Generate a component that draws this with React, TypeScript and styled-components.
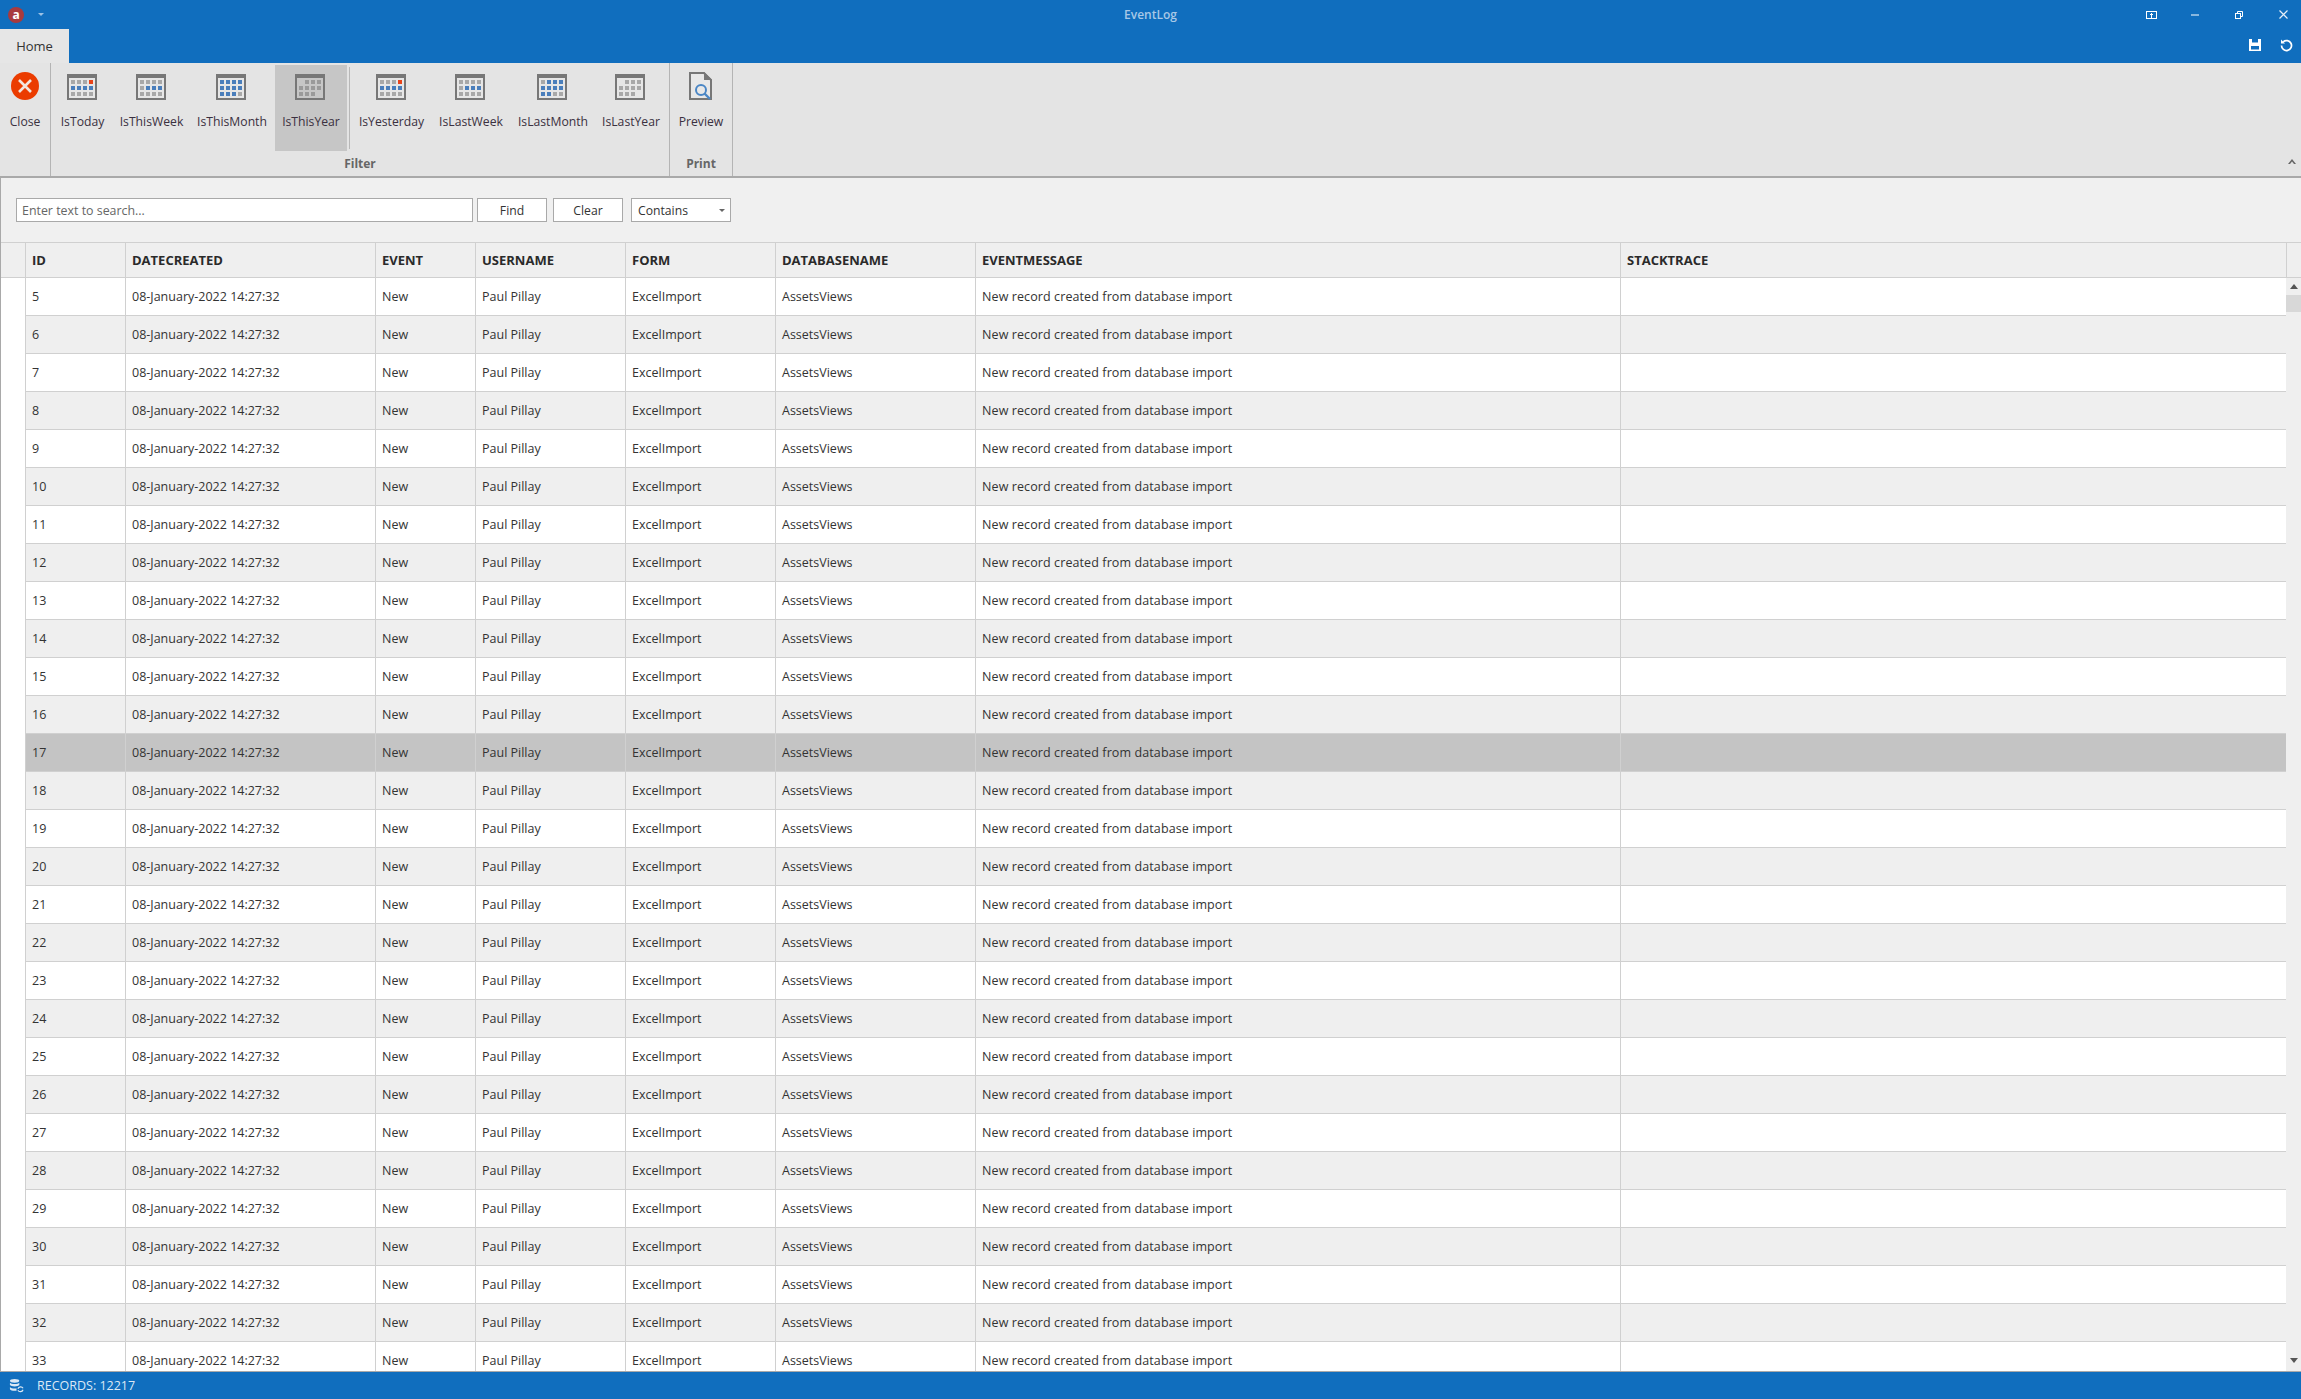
import React from "react";
import styled, { createGlobalStyle } from "styled-components";

const COLS = "25px 100px 250px 100px 150px 150px 200px 645px 1fr";

const Global = createGlobalStyle`
  html, body { margin: 0; padding: 0; height: 100%; overflow: hidden; background: #f0f0f0; }
  #root { height: 100%; }
  * { box-sizing: border-box; }
`;

const Page = styled.div`
  width: 2301px; height: 1399px; display: flex; flex-direction: column; overflow: hidden;
  font-family: "Open Sans", "Noto Sans", sans-serif; font-size: 12px; color: #2b2b2b; background: #f0f0f0;
`;
const TitleBar = styled.div`
  height: 29px; flex: none; background: #106ebe; display: flex; align-items: center; position: relative; padding-left: 8px;
`;
const TitleText = styled.div`
  position: absolute; left: 0; right: 0; top: 7px; text-align: center; color: #a8c8e6; font-weight: 600; font-size: 12px; line-height: 16px;
`;
const WindowIcons = styled.div`
  margin-left: auto; margin-right: -4px; display: flex; align-items: center; height: 100%; position: relative;
`;
const WinBtn = styled.div`
  width: 44px; height: 29px; display: flex; align-items: center; justify-content: center;
`;
const CaretIcon = styled.svg`
  margin-left: 14px;
`;
const TabBar = styled.div`
  height: 34px; flex: none; background: #106ebe; display: flex; align-items: stretch; justify-content: space-between;
`;
const Tab = styled.div`
  width: 69px; background: #e6e6e6; display: flex; align-items: center; justify-content: center; color: #333; font-size: 13px;
`;
const QuickIcons = styled.div`
  display: flex; align-items: center; gap: 19px; padding-right: 8px; margin-top: -2px;
`;
const Ribbon = styled.div`
  height: 115px; flex: none; background: #e4e4e4; border-bottom: 2px solid #a9a9a9; display: flex; position: relative;
`;
const Group = styled.div<{ $w: number }>`
  width: ${(p) => p.$w}px; flex: none; border-right: 1px solid #b4b4b4; display: flex; flex-direction: column;
`;
const GroupItems = styled.div`
  height: 88px; display: flex; padding-top: 2px;
`;
const GroupLabel = styled.div`
  flex: 1; text-align: center; font-weight: 700; font-size: 12px; line-height: 20px; color: #666; padding-top: 3px;
`;
const Big = styled.div<{ $w: number; $active?: boolean }>`
  width: ${(p) => p.$w}px; flex: none; height: 86px; display: flex; flex-direction: column; align-items: center;
  background: ${(p) => (p.$active ? "#c6c6c6" : "transparent")}; color: #3a3040; font-size: 12.2px; line-height: 17px; padding-top: 7px;
`;
const IconWrap = styled.div`
  height: 28px; margin-bottom: 13px; display: flex; align-items: flex-end; justify-content: center;
`;
const CalendarSvg = styled.svg`
  margin-right: 2px;
`;
const RibbonDivider = styled.div`
  width: 1px; height: 82px; background: #b8b8b8; margin: 2px 0 0 2px; flex: none;
`;
const Collapse = styled.div`
  position: absolute; right: 5px; top: 96px; line-height: 0;
`;
const SearchBar = styled.div`
  height: 64px; flex: none; background: #f0f0f0; display: flex; align-items: flex-start; padding: 20px 0 0 15px; border-left: 1px solid #a9a9a9;
`;
const SearchInput = styled.div`
  width: 457px; height: 24px; background: #fff; border: 1px solid #a9a9a9; color: #666; padding-left: 5px; line-height: 23px; font-size: 12.4px; margin-right: 4px;
`;
const Btn = styled.div<{ $w: number; $mr: number }>`
  width: ${(p) => p.$w}px; margin-right: ${(p) => p.$mr}px; height: 24px; background: #fff; border: 1px solid #a9a9a9; text-align: center; line-height: 23px; font-size: 12.2px; color: #333;
`;
const Select = styled.div`
  width: 100px; height: 24px; background: #fff; border: 1px solid #a9a9a9; line-height: 23px; font-size: 12.2px; color: #333; padding-left: 6px; position: relative;
`;
const Caret = styled.div`
  position: absolute; right: 5px; top: 10px; width: 0; height: 0; border-left: 3px solid transparent; border-right: 3px solid transparent; border-top: 3px solid #666;
`;
const GridArea = styled.div`
  flex: 1; min-height: 0; display: flex; overflow: hidden; border-left: 1px solid #a9a9a9; position: relative;
`;
const GridMain = styled.div`
  flex: 1; min-width: 0; display: flex; flex-direction: column; overflow: hidden;
`;
const HeaderRow = styled.div`
  height: 36px; flex: none; display: grid; grid-template-columns: ${COLS}; background: #efefef; border-top: 1px solid #d0d0d0; border-bottom: 1px solid #d0d0d0;
`;
const HeaderCell = styled.div`
  border-right: 1px solid #d0d0d0; padding-left: 6px; font-weight: 700; font-size: 13px; line-height: 34px; color: #2a2a2a; white-space: nowrap;
`;
const LastHeaderCell = styled(HeaderCell)`
  border-right: none;
`;
const Row = styled.div<{ $bg: string }>`
  height: 38px; flex: none; display: grid; grid-template-columns: ${COLS}; background: ${(p) => p.$bg};
`;
const Indicator = styled.div`
  background: #fff; border-right: 1px solid #d0d0d0;
`;
const Cell = styled.div`
  border-right: 1px solid #d0d0d0; border-bottom: 1px solid #d0d0d0; padding-left: 6px; line-height: 37px; font-size: 12.5px; color: #333; white-space: nowrap; overflow: hidden;
`;
const MessageCell = styled(Cell)`
  letter-spacing: 0.1px;
`;
const LastCell = styled(Cell)`
  border-right: none;
`;
const Scrollbar = styled.div`
  width: 15px; flex: none; display: flex; flex-direction: column; background: #efefef; position: relative;
`;
const ScrollCorner = styled.div`
  height: 36px; flex: none; border-top: 1px solid #d0d0d0; border-bottom: 1px solid #d0d0d0; border-left: 1px solid #d0d0d0;
`;
const ScrollUp = styled.div`
  height: 17px; flex: none; display: flex; align-items: center; justify-content: center;
`;
const Thumb = styled.div`
  height: 17px; flex: none; background: #d8d8d8;
`;
const ScrollDown = styled.div`
  margin-top: auto; height: 17px; flex: none; display: flex; align-items: flex-start; justify-content: center; padding-top: 4px;
`;
const StatusBar = styled.div`
  height: 28px; flex: none; background: #106ebe; border-top: 1px solid #a9a9a9; display: flex; align-items: center; padding-left: 9px; color: #dbe8f5; font-size: 12.5px;
`;
const StatusText = styled.span`
  margin-left: 13px;
`;

const Calendar = ({ on, red, dim, blank = [] }: { on: number[]; red?: number; dim?: boolean; blank?: number[] }) => {
  const xs = [4, 10, 16, 22];
  const ys = [6, 12, 18];
  const cells: React.ReactNode[] = [];
  ys.forEach((y, r) =>
    xs.forEach((x, c) => {
      const i = r * 4 + c;
      if (blank.includes(i)) return;
      const fill = i === red ? "#e8431a" : on.includes(i) ? "#4a7ebb" : "#a8a8a8";
      cells.push(<rect key={i} x={x} y={y} width="4" height="4" fill={dim ? "#9a9a9a" : fill} />);
    })
  );
  return (
    <CalendarSvg width="30" height="26" viewBox="0 0 30 26">
      <rect x="0" y="0" width="30" height="26" fill="#777" />
      <rect x="2" y="4" width="26" height="20" fill={dim ? "#c6c6c6" : "#e6e6e6"} />
      {cells}
    </CalendarSvg>
  );
};

const CloseIcon = () => (
  <svg width="28" height="28" viewBox="0 0 28 28">
    <circle cx="14" cy="14" r="14" fill="#eb3c00" />
    <path d="M8 8 L20 20 M20 8 L8 20" stroke="#f2e6df" strokeWidth="2.6" />
  </svg>
);

const PreviewIcon = () => (
  <svg width="24" height="28" viewBox="0 0 24 28">
    <path d="M1 1 H15 L22 8 V27 H1 Z" fill="#e8e8e8" stroke="#777" strokeWidth="2" />
    <path d="M15 0 L23 8 H15 Z" fill="#777" />
    <circle cx="12" cy="18" r="5" fill="#e8e8e8" stroke="#4a86c5" strokeWidth="2" />
    <path d="M15.5 21.5 L21 27" stroke="#4a86c5" strokeWidth="2.4" />
  </svg>
);

const Logo = () => (
  <svg width="16" height="16" viewBox="0 0 16 16">
    <circle cx="8" cy="8" r="8" fill="#a83a3e" />
    <text x="8" y="12" textAnchor="middle" fontSize="12" fontWeight="700" fontFamily="Open Sans" fill="#fff">a</text>
  </svg>
);

type F = { label: string; w: number; on: number[]; red?: number; active?: boolean; dim?: boolean; blank?: number[] };
const filters: F[] = [
  { label: "IsToday", w: 63, on: [4, 5, 6, 7], red: 3 },
  { label: "IsThisWeek", w: 75, on: [5, 6, 7] },
  { label: "IsThisMonth", w: 86, on: [0, 1, 2, 3, 4, 5, 6, 7, 8, 9, 10] },
  { label: "IsThisYear", w: 72, on: [], active: true, dim: true, blank: [0, 11] },
];
const filters2: F[] = [
  { label: "IsYesterday", w: 83, on: [4, 5, 6, 7], red: 3 },
  { label: "IsLastWeek", w: 76, on: [5, 6, 7] },
  { label: "IsLastMonth", w: 88, on: [1, 2, 3, 4, 5, 6, 7, 8, 9] },
  { label: "IsLastYear", w: 68, on: [], blank: [0, 11] },
];

const rows = Array.from({ length: 29 }, (_, i) => i + 5);

export default function App() {
  return (
    <Page>
      <Global />
      <TitleBar>
        <Logo />
        <CaretIcon width="6" height="3" viewBox="0 0 6 3">
          <path d="M0 0H6L3 3Z" fill="#9cc2e5" />
        </CaretIcon>
        <TitleText>EventLog</TitleText>
        <WindowIcons>
          <WinBtn>
            <svg width="11" height="8" viewBox="0 0 11 8" fill="none" stroke="#fff">
              <rect x=".5" y=".5" width="10" height="7" />
              <path d="M5.5 2V7.5M4 3.5H7" />
            </svg>
          </WinBtn>
          <WinBtn>
            <svg width="8" height="2" viewBox="0 0 8 2"><path d="M0 1H8" stroke="#fff" /></svg>
          </WinBtn>
          <WinBtn>
            <svg width="8" height="8" viewBox="0 0 8 8" fill="none" stroke="#fff">
              <rect x=".5" y="2.5" width="5" height="5" />
              <path d="M2.5 2.5V.5H7.5V5.5H5.5" />
            </svg>
          </WinBtn>
          <WinBtn>
            <svg width="9" height="9" viewBox="0 0 9 9"><path d="M.5 .5L8.5 8.5M8.5 .5L.5 8.5" stroke="#e6eff8" strokeWidth="1.2" /></svg>
          </WinBtn>
        </WindowIcons>
      </TitleBar>
      <TabBar>
        <Tab>Home</Tab>
        <QuickIcons>
          <svg width="12" height="12" viewBox="0 0 12 12">
            <path fillRule="evenodd" d="M0 0H12V12H0ZM3 0V3.5H9V0ZM2 7V10.5H10V7Z" fill="#fff" />
          </svg>
          <svg width="13" height="13" viewBox="0 0 13 13" fill="none">
            <path d="M3.2 2.8A5 5 0 1 1 1.5 6.5" stroke="#fff" strokeWidth="1.7" />
            <path d="M1 0.5V4.5H5Z" fill="#fff" />
          </svg>
        </QuickIcons>
      </TabBar>
      <Ribbon>
        <Group $w={51}>
          <GroupItems>
            <Big $w={50}>
              <IconWrap><CloseIcon /></IconWrap>
              Close
            </Big>
          </GroupItems>
        </Group>
        <Group $w={619}>
          <GroupItems>
            {filters.map((f) => (
              <Big key={f.label} $w={f.w} $active={f.active}>
                <IconWrap><Calendar on={f.on} red={f.red} dim={f.dim} blank={f.blank} /></IconWrap>
                {f.label}
              </Big>
            ))}
            <RibbonDivider />
            {filters2.map((f) => (
              <Big key={f.label} $w={f.w}>
                <IconWrap><Calendar on={f.on} red={f.red} blank={f.blank} /></IconWrap>
                {f.label}
              </Big>
            ))}
          </GroupItems>
          <GroupLabel>Filter</GroupLabel>
        </Group>
        <Group $w={63}>
          <GroupItems>
            <Big $w={62}>
              <IconWrap><PreviewIcon /></IconWrap>
              Preview
            </Big>
          </GroupItems>
          <GroupLabel>Print</GroupLabel>
        </Group>
        <Collapse>
          <svg width="8" height="5" viewBox="0 0 8 5"><path d="M0 5L4 0L8 5H6L4 2.6L2 5Z" fill="#666" /></svg>
        </Collapse>
      </Ribbon>
      <SearchBar>
        <SearchInput>Enter text to search...</SearchInput>
        <Btn $w={70} $mr={6}>Find</Btn>
        <Btn $w={70} $mr={8}>Clear</Btn>
        <Select>Contains<Caret /></Select>
      </SearchBar>
      <GridArea>
        <GridMain>
          <HeaderRow>
            <HeaderCell />
            <HeaderCell>ID</HeaderCell>
            <HeaderCell>DATECREATED</HeaderCell>
            <HeaderCell>EVENT</HeaderCell>
            <HeaderCell>USERNAME</HeaderCell>
            <HeaderCell>FORM</HeaderCell>
            <HeaderCell>DATABASENAME</HeaderCell>
            <HeaderCell>EVENTMESSAGE</HeaderCell>
            <LastHeaderCell>STACKTRACE</LastHeaderCell>
          </HeaderRow>
          {rows.map((n, i) => (
            <Row key={n} $bg={n === 17 ? "#c4c4c4" : i % 2 ? "#efefef" : "#ffffff"}>
              <Indicator />
              <Cell>{n}</Cell>
              <Cell>08-January-2022 14:27:32</Cell>
              <Cell>New</Cell>
              <Cell>Paul Pillay</Cell>
              <Cell>ExcelImport</Cell>
              <Cell>AssetsViews</Cell>
              <MessageCell>New record created from database import</MessageCell>
              <LastCell />
            </Row>
          ))}
        </GridMain>
        <Scrollbar>
          <ScrollCorner />
          <ScrollUp>
            <svg width="8" height="5" viewBox="0 0 8 5"><path d="M0 5L4 0L8 5Z" fill="#555" /></svg>
          </ScrollUp>
          <Thumb />
          <ScrollDown>
            <svg width="8" height="5" viewBox="0 0 8 5"><path d="M0 0L4 5L8 0Z" fill="#555" /></svg>
          </ScrollDown>
        </Scrollbar>
      </GridArea>
      <StatusBar>
        <svg width="15" height="15" viewBox="0 0 16 16">
          <ellipse cx="6" cy="3" rx="5" ry="2" fill="#dce8f4" />
          <path d="M1 5C2 7 10 7 11 5V7.5C10 9.5 2 9.5 1 7.5ZM1 9.5C2 11.5 7 11.5 8 11V13.5C5 14 2 13.5 1 12Z" fill="#dce8f4" />
          <path d="M9.5 11.5A3 3 0 0 1 15 11M15 12.5A3 3 0 0 1 9.5 13" stroke="#dce8f4" strokeWidth="1.2" fill="none" />
        </svg>
        <StatusText>RECORDS: 12217</StatusText>
      </StatusBar>
    </Page>
  );
}
